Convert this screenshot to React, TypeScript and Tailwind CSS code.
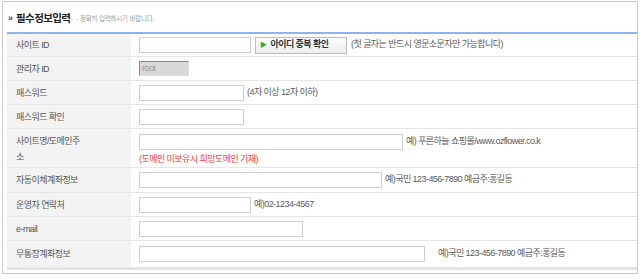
import React from "react";

const Input = ({ w, className = "" }: { w: string; className?: string }) => (
  <div className={`h-[16px] ${w} border border-[#cfcfcf] bg-white shrink-0 ${className}`} />
);

const Row = ({
  label,
  h,
  children,
  align = "items-center",
}: {
  label: React.ReactNode;
  h: string;
  children: React.ReactNode;
  align?: string;
}) => (
  <div className={`flex ${h} border-b border-[#e6e6e6]`}>
    <div className={`w-[124px] shrink-0 bg-[#f3f3f3] flex ${align} pl-[9px] text-[#555] leading-[16px]`}>
      {label}
    </div>
    <div className="flex-1 flex items-center pl-[8px] bg-white">{children}</div>
  </div>
);

export default function App() {
  return (
    <div className="w-[640px] h-[279px] bg-white font-['Liberation_Sans','Noto_Sans_CJK_KR',sans-serif] text-[9px] tracking-[-0.55px]">
      <div className="ml-[2px] mt-[1px] w-[636px] h-[273px] border border-[#c9c9c9] pl-[4px] flex flex-col">
        <div className="h-[30px] flex items-center pt-[4px] pl-[1px]">
          <span className="text-[#444] text-[9px] font-bold mr-[4px] tracking-[-1px]">»</span>
          <span className="text-[#222] text-[10.5px] font-bold tracking-[-0.6px]">필수정보입력</span>
          <span className="text-[#9a9a9a] text-[6.5px] ml-[6px] tracking-[-0.2px]">- 정확히 입력하시기 바랍니다.</span>
        </div>
        <div className="h-[2px] bg-[#8db4ec]" />
        <div className="flex flex-col border-b-2 border-[#e3e3e3]">
          <Row label="사이트 ID" h="h-[23px]">
            <Input w="w-[112px]" />
            <div className="ml-[4px] h-[17px] w-[92px] border border-[#bdbdbd] bg-gradient-to-b from-white to-[#ececec] flex items-center pl-[4px]">
              <span className="text-[#3aa52b] text-[7px] mr-[4px]">▶</span>
              <span className="text-[#333] font-bold text-[9px]">아이디 중복 확인</span>
            </div>
            <span className="ml-[4px] text-[#5a5a5a]">(첫 글자는 반드시 영문소문자만 가능합니다)</span>
          </Row>
          <Row label="관리자 ID" h="h-[24px]">
            <div className="h-[15px] w-[50px] bg-[#d8d8d8] border-t border-l border-[#8a8a8a] border-r border-b border-r-[#e0e0e0] border-b-[#e0e0e0] text-[#9a9a9a] pl-[2px] leading-[13px]">
              root
            </div>
          </Row>
          <Row label="패스워드" h="h-[24px]">
            <Input w="w-[105px]" />
            <span className="ml-[3px] text-[#5a5a5a]">(4자 이상 12자 이하)</span>
          </Row>
          <Row label="패스워드 확인" h="h-[24px]">
            <Input w="w-[105px]" />
          </Row>
          <div className="flex h-[39px] border-b border-[#e6e6e6]">
            <div className="w-[124px] shrink-0 bg-[#f3f3f3] pl-[9px] pt-[4px] text-[#555] leading-[16px]">
              사이트명/도메인주
              <br />
              소
            </div>
            <div className="flex-1 flex flex-col pl-[8px] pt-[5px] bg-white">
              <div className="flex items-center">
                <Input w="w-[264px]" />
                <span className="ml-[3px] text-[#5a5a5a]">예) 푸른하늘 쇼핑몰/www.ozflower.co.k</span>
              </div>
              <span className="mt-[2px] text-[#f23c3c] leading-[14px]">(도메인 미보유시 희망도메인 기재)</span>
            </div>
          </div>
          <Row label="자동이체계좌정보" h="h-[25px]">
            <Input w="w-[243px]" />
            <span className="ml-[3px] text-[#5a5a5a]">예)국민 123-456-7890 예금주:홍길동</span>
          </Row>
          <Row label="운영자 연락처" h="h-[24px]">
            <Input w="w-[112px]" />
            <span className="ml-[3px] text-[#5a5a5a]">예)02-1234-4567</span>
          </Row>
          <Row label="e-mail" h="h-[24px]">
            <Input w="w-[164px]" />
          </Row>
          <Row label="무통장계좌정보" h="h-[27px]">
            <Input w="w-[286px]" />
            <span className="ml-[13px] text-[#5a5a5a]">예)국민 123-456-7890 예금주:홍길동</span>
          </Row>
        </div>
      </div>
    </div>
  );
}
